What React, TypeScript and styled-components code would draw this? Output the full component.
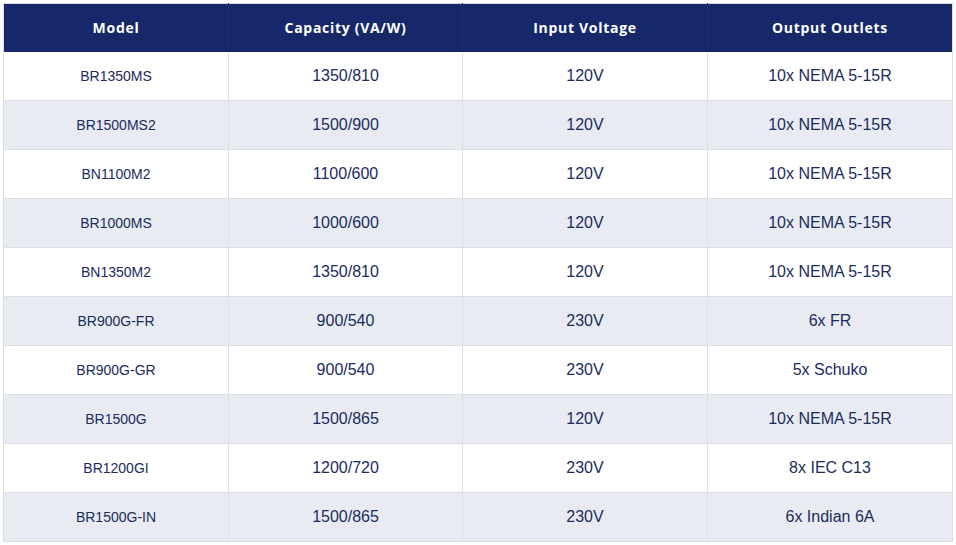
import React from "react";
import styled, { createGlobalStyle } from "styled-components";

const Global = createGlobalStyle`
  html, body { margin: 0; padding: 0; background: #ffffff; }
  body { font-family: "Liberation Sans", Arial, sans-serif; }
`;

const Wrap = styled.div`
  padding: 3px;
`;

const Table = styled.table`
  width: 950px;
  border-collapse: collapse;
  table-layout: fixed;
  border: 1px solid #d9dce3;
`;

const HeadCell = styled.th`
  background: #16286a;
  color: #ffffff;
  font-family: "Open Sans", "Noto Sans", sans-serif;
  font-weight: 700;
  font-size: 14px;
  letter-spacing: 0.7px;
  line-height: 1;
  height: 48px;
  padding: 0;
  text-align: center;
  border-right: 1px solid #1c2e70;
  &:last-child { border-right: none; }
`;

const Row = styled.tr<{ $alt: boolean }>`
  background: ${(p) => (p.$alt ? "#e8ebf2" : "#ffffff")};
`;

const Cell = styled.td<{ $small?: boolean }>`
  height: 48px;
  padding: 0;
  text-align: center;
  color: #1a2b5f;
  font-family: "Liberation Sans", Arial, sans-serif;
  font-size: ${(p) => (p.$small ? "14px" : "16px")};
  border-right: 1px solid #dcdfe6;
  border-bottom: 1px solid #dcdfe6;
  &:last-child { border-right: none; }
`;

const rows = [
  ["BR1350MS", "1350/810", "120V", "10x NEMA 5-15R"],
  ["BR1500MS2", "1500/900", "120V", "10x NEMA 5-15R"],
  ["BN1100M2", "1100/600", "120V", "10x NEMA 5-15R"],
  ["BR1000MS", "1000/600", "120V", "10x NEMA 5-15R"],
  ["BN1350M2", "1350/810", "120V", "10x NEMA 5-15R"],
  ["BR900G-FR", "900/540", "230V", "6x FR"],
  ["BR900G-GR", "900/540", "230V", "5x Schuko"],
  ["BR1500G", "1500/865", "120V", "10x NEMA 5-15R"],
  ["BR1200GI", "1200/720", "230V", "8x IEC C13"],
  ["BR1500G-IN", "1500/865", "230V", "6x Indian 6A"],
];

export default function App() {
  return (
    <>
      <Global />
      <Wrap>
        <Table>
          <colgroup>
            <col style={{ width: 225 }} />
            <col style={{ width: 234 }} />
            <col style={{ width: 245 }} />
            <col style={{ width: 245 }} />
          </colgroup>
          <thead>
            <tr>
              <HeadCell>Model</HeadCell>
              <HeadCell>Capacity (VA/W)</HeadCell>
              <HeadCell>Input Voltage</HeadCell>
              <HeadCell>Output Outlets</HeadCell>
            </tr>
          </thead>
          <tbody>
            {rows.map((r, i) => (
              <Row key={r[0]} $alt={i % 2 === 1}>
                <Cell $small>{r[0]}</Cell>
                <Cell>{r[1]}</Cell>
                <Cell>{r[2]}</Cell>
                <Cell>{r[3]}</Cell>
              </Row>
            ))}
          </tbody>
        </Table>
      </Wrap>
    </>
  );
}
